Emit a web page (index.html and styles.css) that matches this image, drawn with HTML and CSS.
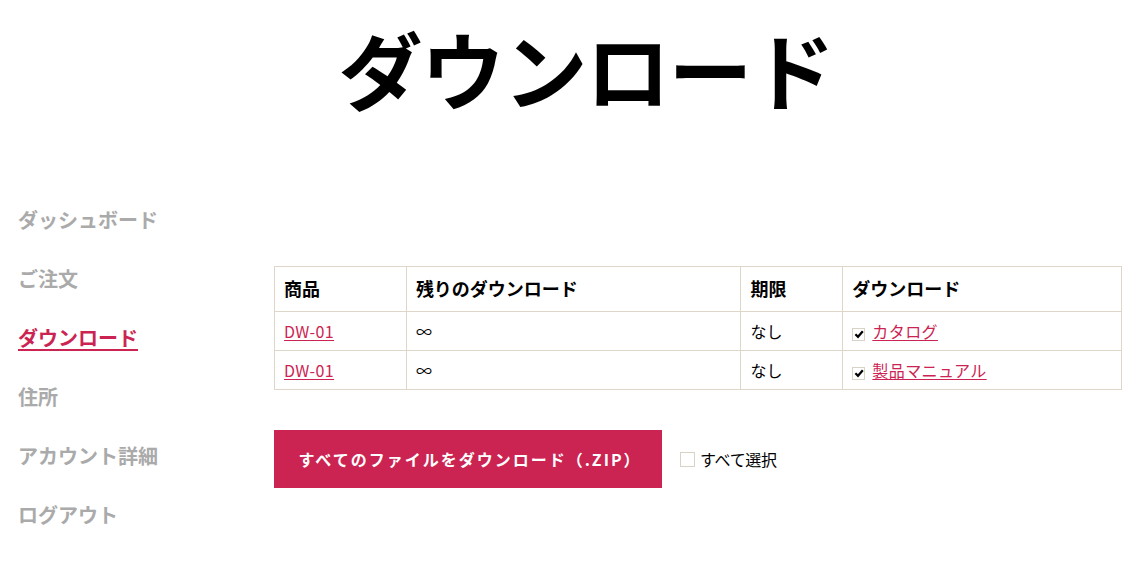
FILE: index.html
```html
<!DOCTYPE html>
<html lang="ja">
<head>
<meta charset="utf-8">
<link rel="stylesheet" href="styles.css">
</head>
<body>
<h1 class="title">ダウンロード</h1>
<div class="layout">
  <nav class="side">
    <a class="nav-item" href="#">ダッシュボード</a>
    <a class="nav-item" href="#">ご注文</a>
    <a class="nav-item active" href="#">ダウンロード</a>
    <a class="nav-item" href="#">住所</a>
    <a class="nav-item" href="#">アカウント詳細</a>
    <a class="nav-item" href="#">ログアウト</a>
  </nav>
  <main class="content">
    <table class="dl-table">
      <colgroup>
        <col class="c1"><col class="c2"><col class="c3"><col class="c4">
      </colgroup>
      <thead>
        <tr><th>商品</th><th>残りのダウンロード</th><th>期限</th><th>ダウンロード</th></tr>
      </thead>
      <tbody>
        <tr>
          <td><a class="link" href="#">DW-01</a></td>
          <td>∞</td>
          <td>なし</td>
          <td><span class="chk checked"><svg viewBox="0 0 10 10" width="10" height="10"><path d="M1.4 5.2 L4 7.8 L8.8 2.2" fill="none" stroke="#000" stroke-width="2.2"/></svg></span><a class="link" href="#">カタログ</a></td>
        </tr>
        <tr>
          <td><a class="link" href="#">DW-01</a></td>
          <td>∞</td>
          <td>なし</td>
          <td><span class="chk checked"><svg viewBox="0 0 10 10" width="10" height="10"><path d="M1.4 5.2 L4 7.8 L8.8 2.2" fill="none" stroke="#000" stroke-width="2.2"/></svg></span><a class="link" href="#">製品マニュアル</a></td>
        </tr>
      </tbody>
    </table>
    <div class="actions">
      <button class="btn">すべてのファイルをダウンロード（.ZIP）</button>
      <label class="select-all"><span class="chk big"></span>すべて選択</label>
    </div>
  </main>
</div>
</body>
</html>
```
FILE: styles.css
```css
html, body {
  margin: 0;
  padding: 0;
  background: #fff;
}
body {
  font-family: "Noto Sans CJK JP", "Noto Sans", sans-serif;
  color: #000;
  width: 1142px;
}
.title {
  margin: 0;
  padding-top: 12px;
  text-align: center;
  font-size: 84px;
  line-height: 112px;
  font-weight: 700;
  padding-left: 30px;
  letter-spacing: -1.5px;
}
.layout {
  display: grid;
  grid-template-columns: 274px 848px;
  margin-top: 81px;
}
.side {
  display: flex;
  flex-direction: column;
  padding-left: 18px;
}
.nav-item {
  display: block;
  font-size: 20px;
  line-height: 30px;
  height: 59px;
  font-weight: 700;
  color: #aaaaaa;
  text-decoration: none;
}
.nav-item.active {
  color: #cc2452;
  text-decoration: underline;
  text-underline-offset: 3px;
  text-decoration-thickness: 2px;
}
.content {
  padding-top: 61px;
}
.dl-table {
  width: 848px;
  border-collapse: collapse;
  font-size: 16px;
}
.c1 { width: 132px; }
.c2 { width: 335px; }
.c3 { width: 102px; }
.c4 { width: 279px; }
.dl-table th, .dl-table td {
  border: 1px solid #ddd6c9;
  text-align: left;
  padding: 0 9px;
}
.dl-table th {
  height: 42px;
  font-size: 18px;
  line-height: 20px;
  font-weight: 700;
  padding-top: 0;
  padding-bottom: 2px;
}
.dl-table td {
  height: 38px;
  line-height: 20px;
  font-weight: 400;
  padding-top: 0;
  padding-bottom: 0;
}
.link {
  color: #cc2452;
  text-decoration: underline;
  text-underline-offset: 2px;
  letter-spacing: 0.4px;
}
.chk {
  display: inline-flex;
  align-items: center;
  justify-content: center;
  width: 13px;
  height: 13px;
  border: 1px solid #d9d2c6;
  background: #fff;
  box-sizing: border-box;
  vertical-align: -1px;
  margin-right: 7px;
}
.chk.big {
  width: 15px;
  height: 15px;
  margin-right: 5px;
  vertical-align: -2px;
}
.actions {
  display: flex;
  align-items: center;
  margin-top: 40px;
}
.btn {
  width: 388px;
  height: 58px;
  border: 0;
  background: #cc2452;
  color: #fff;
  font-family: "Noto Sans CJK JP", sans-serif;
  font-size: 16px;
  font-weight: 700;
  cursor: pointer;
  padding: 0 0 0 4px;
  letter-spacing: 2px;
}
.select-all {
  margin-left: 18px;
  font-size: 16px;
  display: flex;
  align-items: center;
  letter-spacing: -0.3px;
}
```
